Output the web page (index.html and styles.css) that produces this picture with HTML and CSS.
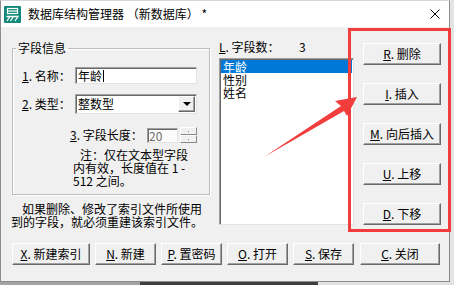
FILE: index.html
```html
<!DOCTYPE html>
<html lang="zh-CN">
<head>
    <meta charset="UTF-8">
    <title>数据库结构管理器</title>
    <link rel="stylesheet" href="styles.css">
</head>
<body>
    <div class="window">
        <div class="titlebar">
            <svg class="app-icon" width="17" height="17" viewBox="0 0 17 17">
                <rect x="0" y="0" width="17" height="17" rx="1" fill="#14897b"/>
                <rect x="3.5" y="2.5" width="10" height="5" fill="none" stroke="#fff" stroke-width="1.2"/>
                <line x1="3.5" y1="5" x2="13.5" y2="5" stroke="#fff" stroke-width="1.2"/>
                <path d="M2.5 10.5 H14 L11 15" fill="none" stroke="#fff" stroke-width="1.3"/>
                <path d="M6 10.5 L3 15 M9.5 10.5 L6.5 15" fill="none" stroke="#fff" stroke-width="1.3"/>
            </svg>
            <span class="title">数据库结构管理器 （新数据库） *</span>
            <svg class="close" width="10" height="10" viewBox="0 0 10 10">
                <path d="M0.5 0.5 L9.5 9.5 M9.5 0.5 L0.5 9.5" stroke="#000" stroke-width="1"/>
            </svg>
        </div>

        <div class="client">
            <div class="content">
                <div class="col-left">
                    <fieldset class="group">
                        <legend>字段信息</legend>
                        <div class="row">
                            <label class="lbl"><u>1</u>. 名称：</label>
                            <div class="edit">年龄<span class="caret"></span></div>
                        </div>
                        <div class="row row-type">
                            <label class="lbl"><u>2</u>. 类型：</label>
                            <div class="combo">
                                <span class="combo-text">整数型</span>
                                <span class="combo-btn"><i class="tri"></i></span>
                            </div>
                        </div>
                        <div class="row row-len">
                            <label class="lbl lbl-len"><u>3</u>. 字段长度：</label>
                            <div class="edit spin-edit">20</div>
                            <div class="spin"><span><i></i></span><span><i></i></span></div>
                        </div>
                        <p class="note"><span class="first">注：仅在文本型字段</span><br>内有效，长度值在 1 -<br>512 之间。</p>
                    </fieldset>
                    <p class="hint">如果删除、修改了索引文件所使用<br>到的字段，就必须重建该索引文件。</p>
                </div>

                <div class="col-mid">
                    <div class="count">
                        <span class="count-lbl"><u>L</u>. 字段数：</span>
                        <span>3</span>
                    </div>
                    <ul class="listbox">
                        <li class="sel">年龄</li>
                        <li>性别</li>
                        <li>姓名</li>
                    </ul>
                </div>

                <div class="col-right">
                    <button class="btn"><u>R</u>. 删除</button>
                    <button class="btn"><u>I</u>. 插入</button>
                    <button class="btn"><u>M</u>. 向后插入</button>
                    <button class="btn"><u>U</u>. 上移</button>
                    <button class="btn"><u>D</u>. 下移</button>
                </div>
            </div>

            <div class="actions">
                <button class="btn btn-wide"><u>X</u>. 新建索引</button>
                <button class="btn"><u>N</u>. 新建</button>
                <button class="btn"><u>P</u>. 置密码</button>
                <button class="btn"><u>O</u>. 打开</button>
                <button class="btn"><u>S</u>. 保存</button>
                <button class="btn btn-close"><u>C</u>. 关闭</button>
            </div>
        </div>
    </div>
    <div class="desk-bottom"></div>

    <svg class="annot" width="454" height="285" viewBox="0 0 454 285">
        <rect x="349.5" y="29.5" width="100" height="201" fill="none" stroke="#f23d3d" stroke-width="3"/>
        <polygon points="357,97 335,101 341,106 264,157 344,111 347,116" fill="#f23d3d"/>
    </svg>
</body>
</html>
```

FILE: styles.css
```css
* {
    box-sizing: border-box;
}
body {
    margin: 0;
    width: 454px;
    height: 285px;
    overflow: hidden;
    position: relative;
    background-color: #e4e4e4;
    font-family: "Noto Sans CJK SC", sans-serif;
    font-size: 12px;
    color: #000;
}
.window {
    width: 450px;
    height: 282px;
    background-color: #f0f0f0;
    border: 1px solid #8c8c8c;
    border-top-color: #d8d8d8;
    display: flex;
    flex-direction: column;
}
.titlebar {
    height: 26px;
    background-color: #fff;
    display: flex;
    align-items: center;
    padding-left: 3px;
    flex-shrink: 0;
}
.title {
    margin-left: 7px;
    font-size: 12px;
    line-height: 14px;
}
.close {
    margin-left: auto;
    margin-right: 9px;
}
.client {
    flex: 1;
    padding: 13px 0 0 11px;
}
.content {
    display: grid;
    grid-template-columns: 198px 135px 78px;
    column-gap: 9px;
    height: 185px;
}

/* left column */
.group {
    margin: 2px 0 0;
    padding: 0 0 7px 9px;
    border: 1px solid #bcbcbc;
    box-shadow: 1px 1px 0 #fff, inset 1px 1px 0 #fff;
    min-width: 0;
}
.group legend {
    margin-left: -6px;
    padding: 0 2px;
    line-height: 12px;
}
.row {
    display: flex;
    align-items: center;
    margin-top: 13px;
}
.row-type {
    margin-top: 10px;
}
.row-len {
    margin-top: 13px;
    padding-left: 48px;
}
.lbl {
    width: 53px;
    line-height: 12px;
    white-space: nowrap;
}
.lbl-len {
    width: 77px;
}
.edit {
    width: 122px;
    height: 17px;
    background-color: #fff;
    border: 1px solid;
    border-color: #a0a0a0 #e3e3e3 #e3e3e3 #a0a0a0;
    box-shadow: inset 1px 1px 0 #696969;
    padding-left: 2px;
    line-height: 15px;
    display: flex;
    align-items: center;
}
.caret {
    display: inline-block;
    width: 1px;
    height: 12px;
    background-color: #000;
    margin-left: 1px;
}
.combo {
    width: 122px;
    height: 20px;
    background-color: #fff;
    border: 1px solid;
    border-color: #a0a0a0 #e3e3e3 #e3e3e3 #a0a0a0;
    box-shadow: inset 1px 1px 0 #696969;
    display: flex;
    align-items: center;
    padding: 1px 1px 1px 2px;
}
.combo-text {
    flex: 1;
    line-height: 14px;
}
.combo-btn {
    width: 17px;
    height: 16px;
    background-color: #f0f0f0;
    border: 1px solid;
    border-color: #fff #696969 #696969 #fff;
    box-shadow: inset -1px -1px 0 #a0a0a0;
    display: flex;
    align-items: center;
    justify-content: center;
}
.tri {
    width: 0;
    height: 0;
    border-left: 4px solid transparent;
    border-right: 4px solid transparent;
    border-top: 4px solid #000;
}
.spin-edit {
    width: 31px;
    height: 15px;
    color: #6d6d6d;
    background-color: #fbfbfb;
    line-height: 13px;
    padding-left: 1px;
}
.spin {
    width: 17px;
    height: 16px;
    margin-left: 2px;
    display: flex;
    flex-direction: column;
}
.spin span {
    flex: 1;
    background-color: #f0f0f0;
    border: 1px solid;
    border-color: #fff #8a8a8a #8a8a8a #fff;
    display: flex;
    align-items: center;
    justify-content: center;
}
.spin i {
    width: 1px;
    height: 1px;
    background-color: #8a8a8a;
}
.note {
    margin: 5px 0 0;
    padding-left: 51px;
    line-height: 13px;
}
.note .first {
    padding-left: 7px;
}
.hint {
    margin: 7px 0 0 -1px;
    line-height: 13px;
    text-indent: 11px;
    white-space: nowrap;
}

/* middle column */
.count {
    display: flex;
    line-height: 14px;
}
.count-lbl {
    width: 80px;
}
.listbox {
    list-style: none;
    margin: 4px 0 0;
    padding: 1px;
    height: 167px;
    background-color: #fff;
    border: 1px solid;
    border-color: #a0a0a0 #e3e3e3 #e3e3e3 #a0a0a0;
    box-shadow: inset 1px 1px 0 #696969;
}
.listbox li {
    line-height: 13px;
    padding-left: 2px;
}
.listbox li.sel {
    background-color: #0078d7;
    color: #fff;
}

/* buttons */
.col-right {
    display: flex;
    flex-direction: column;
    gap: 18px;
    padding-top: 3px;
}
.btn {
    height: 22px;
    width: 78px;
    padding: 0;
    font-family: "Noto Sans CJK SC", sans-serif;
    font-size: 12px;
    line-height: 12px;
    color: #000;
    background-color: #f0f0f0;
    border: 1px solid;
    border-color: #fff #696969 #696969 #fff;
    box-shadow: inset -1px -1px 0 #a0a0a0;
}
.actions {
    display: flex;
    gap: 5px;
    margin-top: 18px;
}
.actions .btn {
    width: 61px;
}
.actions .btn-wide {
    width: 78px;
}
.actions .btn-close {
    width: 80px;
    margin-left: 1px;
}

.desk-bottom {
    height: 3px;
    background: linear-gradient(to right, #a3a3a3 0, #a3a3a3 140px, #3e3e3e 140px, #3e3e3e 318px, #e2e2e2 318px);
}
.annot {
    position: absolute;
    left: 0;
    top: 0;
    pointer-events: none;
}
```
